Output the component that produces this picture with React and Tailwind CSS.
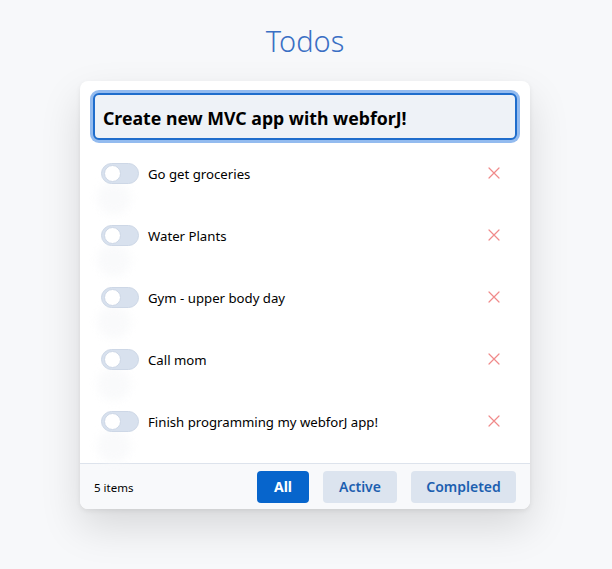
import React from "react";

const todos = [
  "Go get groceries",
  "Water Plants",
  "Gym - upper body day",
  "Call mom",
  "Finish programming my webforJ app!",
];

function Toggle() {
  return (
    <div className="relative w-[38px] h-[21px]">
      <div className="absolute left-[-4px] top-[18px] w-[34px] h-[34px] rounded-full bg-[#f6f7f9] blur-[4px] opacity-60" />
      <div className="relative w-[38px] h-[21px] rounded-full bg-[#d8e1ee] border border-[#cdd7e6] flex items-center px-[2px]">
        <div className="w-[17px] h-[17px] rounded-full bg-white border border-[#cdd7e6]" />
      </div>
    </div>
  );
}

function XIcon() {
  return (
    <svg width="12" height="12" viewBox="0 0 12 12" fill="none">
      <path d="M1 1L11 11M11 1L1 11" stroke="#f08a8a" strokeWidth="1.2" strokeLinecap="round" />
    </svg>
  );
}

export default function App() {
  return (
    <div
      className="min-h-[569px] w-full bg-[#f7f8fa] flex flex-col items-center pr-[2px]"
      style={{ fontFamily: '"Noto Sans", "Open Sans", sans-serif' }}
    >
      <h1 className="mt-[20px] h-[42px] text-[29px] leading-[42px] font-light text-[#3a6fc4]">Todos</h1>
      <div className="mt-[19px] w-[450px] bg-white rounded-[8px] shadow-[0_18px_40px_rgba(0,0,0,0.13),0_2px_5px_rgba(0,0,0,0.07)]">
        <div className="px-[13px] pt-[12px]">
          <div className="h-[47px] rounded-[6px] border-2 border-[#1f6dcc] bg-[#eef2f7] shadow-[0_0_0_3px_rgba(120,170,235,0.8)] flex items-center px-[8px]">
            <span className="pt-[3px] text-[17.7px] font-bold text-black">Create new MVC app with webforJ!</span>
          </div>
        </div>
        <div className="pt-[2px] pb-[11px]">
          {todos.map((t) => (
            <div key={t} className="h-[62px] flex items-center pl-[21px] pr-[30px]">
              <Toggle />
              <span className="ml-[9px] pt-[3px] text-[13.2px] text-black flex-1">{t}</span>
              <XIcon />
            </div>
          ))}
        </div>
        <div className="h-[46px] border-t border-[#dde3ec] bg-[#f8f9fb] rounded-b-[8px] flex items-center pl-[14px] pr-[14px]">
          <span className="pt-[2px] text-[11.5px] text-black flex-1">5 items</span>
          <div className="flex gap-[14px]">
            <button className="h-[32px] w-[52px] rounded-[4px] bg-[#0765cc] text-white text-[14px] font-bold">All</button>
            <button className="h-[32px] w-[74px] rounded-[4px] bg-[#dce4ef] text-[#1c5fb0] text-[14px] font-semibold">Active</button>
            <button className="h-[32px] w-[105px] rounded-[4px] bg-[#dce4ef] text-[#1c5fb0] text-[14px] font-semibold">Completed</button>
          </div>
        </div>
      </div>
    </div>
  );
}
